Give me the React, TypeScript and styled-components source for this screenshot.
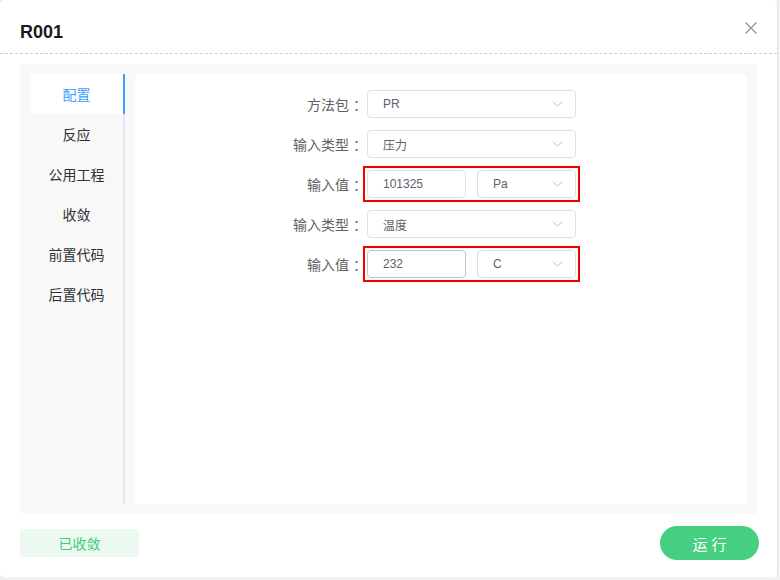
// Packages
import styled, { createGlobalStyle } from 'styled-components';

// Data
const tabs = ['配置', '反应', '公用工程', '收敛', '前置代码', '后置代码'];

// Atoms
function Chevron() {
  return (
    <svg width='11' height='6' viewBox='0 0 11 6' fill='none'>
      <path d='M0.5 0.5 L5.5 5.2 L10.5 0.5' stroke='#c0c4cc' strokeWidth='1' />
    </svg>
  );
}

function CloseIcon() {
  return (
    <svg width='12' height='12' viewBox='0 0 12 12' fill='none'>
      <path d='M0.5 0.5 L11.5 11.5 M11.5 0.5 L0.5 11.5' stroke='#909399' strokeWidth='1.3' />
    </svg>
  );
}

function Select({ value, width }: { value: string; width?: number }) {
  return (
    <SelectBox $width={width}>
      <span>{value}</span>
      <Chevron />
    </SelectBox>
  );
}

function Field({ label, children }: { label: string; children: React.ReactNode }) {
  return (
    <FormRow>
      <Label>
        {label}
        <Colon>：</Colon>
      </Label>
      {children}
    </FormRow>
  );
}

// Main
export default function App() {
  return (
    <>
      <GlobalStyle />
      <Dialog>
        <Header>
          <Title>R001</Title>
          <CloseButton aria-label='close'>
            <CloseIcon />
          </CloseButton>
        </Header>

        <Body>
          <Sidebar>
            {tabs.map((tab, i) => (
              <Tab key={tab} $active={i === 0}>
                {tab}
              </Tab>
            ))}
            <SidebarRest />
          </Sidebar>

          <Content>
            <Field label='方法包'>
              <Select value='PR' />
            </Field>
            <Field label='输入类型'>
              <Select value='压力' />
            </Field>
            <Field label='输入值'>
              <Highlight>
                <Input>101325</Input>
                <Select value='Pa' width={99} />
              </Highlight>
            </Field>
            <Field label='输入类型'>
              <Select value='温度' />
            </Field>
            <Field label='输入值'>
              <Highlight>
                <Input $focused>232</Input>
                <Select value='C' width={99} />
              </Highlight>
            </Field>
          </Content>
        </Body>

        <Footer>
          <StatusTag>已收敛</StatusTag>
          <RunButton>运行</RunButton>
        </Footer>
      </Dialog>
    </>
  );
}

const GlobalStyle = createGlobalStyle`
  body {
    margin: 0;
    background: #f2f2f2;
    font-family: 'Liberation Sans', 'Noto Sans CJK SC', sans-serif;
  }
`;

const Dialog = styled.div`
  width: 777px;
  height: 577px;
  background: #fff;
  border-radius: 4px;
  box-shadow: 0 0 0 1px #e3e3e3;
  display: flex;
  flex-direction: column;
`;

const Header = styled.div`
  height: 54px;
  box-sizing: border-box;
  padding: 20px 20px 0;
  border-bottom: 1px dashed #cfcfcf;
  display: flex;
  justify-content: space-between;
  align-items: flex-start;
`;

const Title = styled.h1`
  margin: 0;
  font-size: 18px;
  line-height: 24px;
  font-weight: bold;
  color: #1a1a1a;
`;

const CloseButton = styled.button`
  border: none;
  background: none;
  padding: 0;
  margin: 2px 0 0 0;
  display: flex;
  cursor: pointer;
`;

const Body = styled.div`
  margin: 10px 20px 0;
  height: 450px;
  box-sizing: border-box;
  padding: 10px;
  background: #f8f8f9;
  border-radius: 4px;
  display: flex;
  gap: 10px;
`;

const Sidebar = styled.div`
  width: 95px;
  display: flex;
  flex-direction: column;
`;

const Tab = styled.div<{ $active?: boolean }>`
  height: 40px;
  display: flex;
  align-items: center;
  justify-content: center;
  font-size: 14px;
  color: ${(p) => (p.$active ? '#409eff' : '#303133')};
  background: ${(p) => (p.$active ? '#fff' : 'transparent')};
  border-right: 2px solid ${(p) => (p.$active ? '#409eff' : '#e4e7ed')};
`;

const SidebarRest = styled.div`
  flex: 1;
  border-right: 2px solid #e4e7ed;
`;

const Content = styled.div`
  flex: 1;
  background: #fff;
  border-radius: 4px;
  padding-top: 16px;
  display: flex;
  flex-direction: column;
  gap: 12px;
`;

const FormRow = styled.div`
  height: 28px;
  display: flex;
  align-items: center;
`;

const Label = styled.label`
  width: 232px;
  flex: none;
  text-align: right;
  font-size: 14px;
  color: #606266;
`;

const Colon = styled.span`
  margin-left: 4px;
`;

const Highlight = styled.div`
  margin: -4px;
  padding: 2px;
  border: 2px solid #f00000;
  display: flex;
  gap: 11px;
`;

const Input = styled.div<{ $focused?: boolean }>`
  width: 99px;
  height: 28px;
  box-sizing: border-box;
  border: 1px solid ${(p) => (p.$focused ? '#c0c4cc' : '#dcdfe6')};
  border-radius: 4px;
  padding-left: 15px;
  display: flex;
  align-items: center;
  font-size: 12px;
  color: #606266;
`;

const SelectBox = styled.div<{ $width?: number }>`
  width: ${(p) => p.$width ?? 209}px;
  height: 28px;
  box-sizing: border-box;
  border: 1px solid #dcdfe6;
  border-radius: 4px;
  padding: 0 12px 0 15px;
  display: flex;
  align-items: center;
  justify-content: space-between;
  font-size: 12px;
  color: #606266;
`;

const Footer = styled.div`
  margin-top: 12px;
  padding: 0 18px 0 20px;
  display: flex;
  justify-content: space-between;
  align-items: center;
`;

const StatusTag = styled.div`
  width: 119px;
  height: 28px;
  border-radius: 2px;
  background: #ecf9f1;
  color: #3ecb7a;
  font-size: 14px;
  display: flex;
  align-items: center;
  justify-content: center;
`;

const RunButton = styled.button`
  width: 99px;
  height: 34px;
  border: none;
  border-radius: 17px;
  background: #46cf80;
  color: #fff;
  font-family: inherit;
  font-size: 15px;
  letter-spacing: 4px;
  padding: 0 0 0 4px;
  cursor: pointer;
`;
